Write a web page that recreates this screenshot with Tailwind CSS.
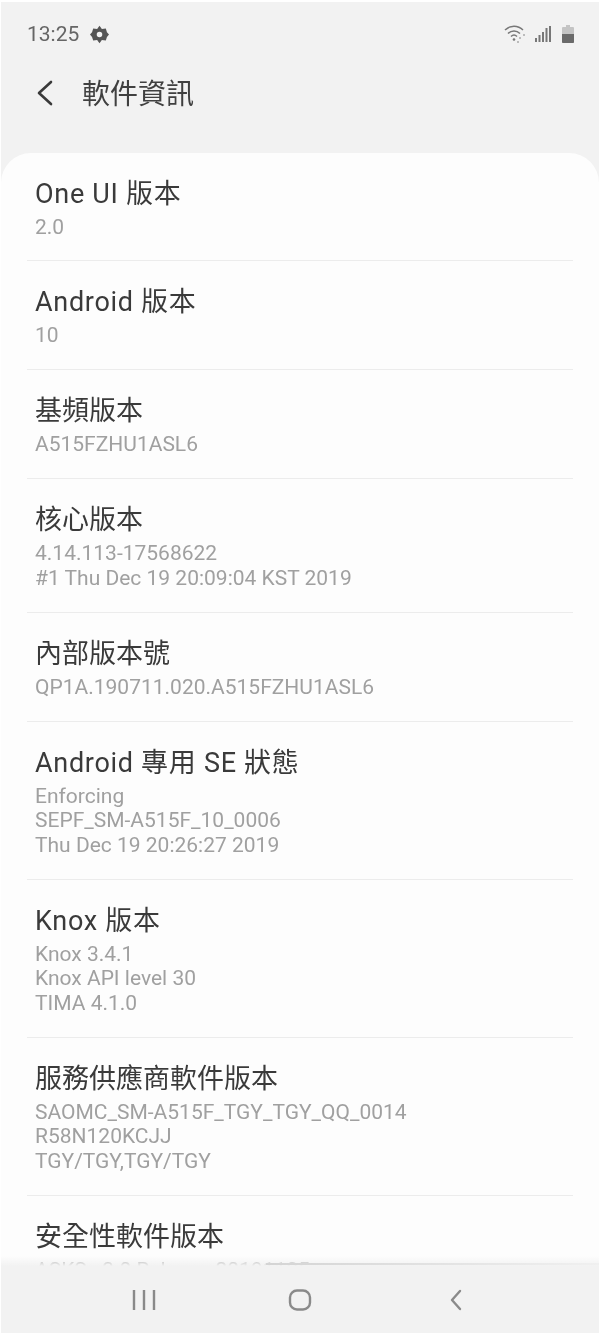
<!DOCTYPE html>
<html lang="zh-Hant">
<head>
    <meta charset="UTF-8">
    <meta name="viewport" content="width=device-width, initial-scale=1.0">
    <title>軟件資訊</title>
    <script src="https://cdn.jsdelivr.net/npm/@tailwindcss/browser@4"></script>
</head>
<body class="bg-white">
    <div class="relative h-[1335px] w-[600px] overflow-hidden border-x border-t-2 border-b-2 border-white bg-[#f2f2f2] font-['Roboto','Noto_Sans_CJK_TC',sans-serif] blur-[0.5px]">
        <!-- Status bar -->
        <div class="flex h-[62px] items-center justify-between pl-[26px] pr-[25px] pt-[2px] text-[#666]">
            <div class="flex items-center gap-[11px]">
                <span class="text-[21px] leading-none">13:25</span>
                <svg class="h-[19px] w-[19px]" viewBox="0 0 24 24" fill="#555">
                    <path fill-rule="evenodd" d="M12 1l3 4 5-.6L21.400 9 24 12l-2.600 3L20 19.600 15 19l-3 4-3-4-5 .6L2.600 15 0 12l2.600-3L4 4.400 9 5zM12 8.500a3.500 3.500 0 1 0 0 7 3.500 3.500 0 0 0 0-7z"/>
                </svg>
            </div>
            <div class="flex items-center gap-[7px]">
                <svg class="h-[20px] w-[24px]" viewBox="0 0 24 20" fill="none" stroke="#777" stroke-width="1.500">
                    <path d="M1 6c5-5 13-5 18 0"/>
                    <path d="M4 9.500c3.500-3.500 8.500-3.500 12 0"/>
                    <path d="M7 12.500c2-2 4-2 6 0"/>
                    <circle cx="10" cy="15.500" r="1.300" fill="#777" stroke="none"/>
                    <circle cx="16" cy="14" r="1" fill="#aaa" stroke="none"/>
                    <circle cx="20" cy="11" r="1" fill="#aaa" stroke="none"/>
                    <circle cx="14" cy="18" r="1" fill="#aaa" stroke="none"/>
                </svg>
                <svg class="h-[20px] w-[16px]" viewBox="0 0 16 20" fill="#777">
                    <rect x="0" y="14" width="2" height="4"/>
                    <rect x="3.500" y="11" width="2" height="7"/>
                    <rect x="7" y="8" width="2" height="10"/>
                    <rect x="10.500" y="4" width="2" height="14"/>
                    <rect x="14" y="2" width="2" height="16"/>
                </svg>
                <svg class="ml-[4px] h-[20px] w-[12px]" viewBox="0 0 12 20">
                    <path d="M4 1h4v2h3a1 1 0 0 1 1 1v14a1 1 0 0 1-1 1H1a1 1 0 0 1-1-1V4a1 1 0 0 1 1-1h3z" fill="#c4c4c4"/>
                    <path d="M0 10h12v8a1 1 0 0 1-1 1H1a1 1 0 0 1-1-1z" fill="#6a6a6a"/>
                </svg>
            </div>
        </div>

        <!-- Header -->
        <div class="flex h-[60px] items-center pl-[35px]">
            <svg class="h-[28px] w-[18px]" viewBox="0 0 18 28" fill="none" stroke="#3a3a3a" stroke-width="2.600" stroke-linecap="round" stroke-linejoin="round">
                <path d="M15 2L3 13l12 11"/>
            </svg>
            <h1 class="ml-[28px] pt-[2px] text-[28px] leading-none text-[#404040]">軟件資訊</h1>
        </div>

        <!-- List card -->
        <div class="mt-[29px] rounded-t-[30px] bg-[#fdfdfd] px-[26px]">
            <div class="border-b border-[#ececec] pl-[8px] pt-[24px] pb-[20.500px]">
                <div class="text-[27px] leading-[34px] tracking-[0.7px] text-[#3a3a3a]">One UI 版本</div>
                <div class="mt-[4px] text-[21px] leading-[24.500px] text-[#a0a0a0]">2.0</div>
            </div>
            <div class="border-b border-[#ececec] pl-[8px] pt-[24px] pb-[21.500px]">
                <div class="text-[27px] leading-[34px] tracking-[0.7px] text-[#3a3a3a]">Android 版本</div>
                <div class="mt-[4px] text-[21px] leading-[24.500px] text-[#a0a0a0]">10</div>
            </div>
            <div class="border-b border-[#ececec] pl-[8px] pt-[24px] pb-[21.500px]">
                <div class="text-[27px] leading-[34px] text-[#3a3a3a]">基頻版本</div>
                <div class="mt-[4px] text-[21px] leading-[24.500px] text-[#a0a0a0]">A515FZHU1ASL6</div>
            </div>
            <div class="border-b border-[#ececec] pl-[8px] pt-[24px] pb-[21.500px]">
                <div class="text-[27px] leading-[34px] text-[#3a3a3a]">核心版本</div>
                <div class="mt-[4px] text-[21px] leading-[24.500px] text-[#a0a0a0]">4.14.113-17568622<br>#1 Thu Dec 19 20:09:04 KST 2019</div>
            </div>
            <div class="border-b border-[#ececec] pl-[8px] pt-[24px] pb-[21.500px]">
                <div class="text-[27px] leading-[34px] text-[#3a3a3a]">內部版本號</div>
                <div class="mt-[4px] text-[21px] leading-[24.500px] text-[#a0a0a0]">QP1A.190711.020.A515FZHU1ASL6</div>
            </div>
            <div class="border-b border-[#ececec] pl-[8px] pt-[24px] pb-[21.500px]">
                <div class="text-[27px] leading-[34px] tracking-[0.7px] text-[#3a3a3a]">Android 專用 SE 狀態</div>
                <div class="mt-[4px] text-[21px] leading-[24.500px] text-[#a0a0a0]">Enforcing<br>SEPF_SM-A515F_10_0006<br>Thu Dec 19 20:26:27 2019</div>
            </div>
            <div class="border-b border-[#ececec] pl-[8px] pt-[24px] pb-[21.500px]">
                <div class="text-[27px] leading-[34px] tracking-[0.7px] text-[#3a3a3a]">Knox 版本</div>
                <div class="mt-[4px] text-[21px] leading-[24.500px] text-[#a0a0a0]">Knox 3.4.1<br>Knox API level 30<br>TIMA 4.1.0</div>
            </div>
            <div class="border-b border-[#ececec] pl-[8px] pt-[24px] pb-[21.500px]">
                <div class="text-[27px] leading-[34px] text-[#3a3a3a]">服務供應商軟件版本</div>
                <div class="mt-[4px] text-[21px] leading-[24.500px] text-[#a0a0a0]">SAOMC_SM-A515F_TGY_TGY_QQ_0014<br>R58N120KCJJ<br>TGY/TGY,TGY/TGY</div>
            </div>
            <div class="pl-[8px] pt-[24px] pb-[21.500px]">
                <div class="text-[27px] leading-[34px] text-[#3a3a3a]">安全性軟件版本</div>
                <div class="mt-[4px] text-[21px] leading-[24.500px] text-[#a0a0a0]">ASKS v3.0 Release 20191105</div>
            </div>
        </div>

        <!-- Bottom navigation over the list -->
        <div class="absolute inset-x-0 bottom-0 h-[67px] bg-[#f2f2f2]">
            <div class="absolute inset-x-0 -top-[10px] h-[10px] bg-gradient-to-t from-[#f2f2f2] to-[#f2f2f2]/0"></div>
            <div class="absolute left-[265px] right-0 -top-[3px] h-[2px] bg-gradient-to-r from-[#d4d4d4] to-[#f0f0f0]"></div>
            <div class="grid h-full grid-cols-[156px_156px_156px] items-center justify-center">
                <svg class="mx-auto h-[22px] w-[24px]" viewBox="0 0 24 22" fill="none" stroke="#8a8a8a" stroke-width="2.400">
                    <path d="M2 1v20M12 1v20M22 1v20"/>
                </svg>
                <svg class="mx-auto h-[22px] w-[24px]" viewBox="0 0 24 22" fill="none" stroke="#8a8a8a" stroke-width="2.400">
                    <rect x="2" y="1.500" width="20" height="19" rx="7"/>
                </svg>
                <svg class="mx-auto h-[22px] w-[14px]" viewBox="0 0 14 22" fill="none" stroke="#8a8a8a" stroke-width="2.400" stroke-linecap="round" stroke-linejoin="round">
                    <path d="M11 2L3 11l8 9"/>
                </svg>
            </div>
        </div>
    </div>
</body>
</html>
